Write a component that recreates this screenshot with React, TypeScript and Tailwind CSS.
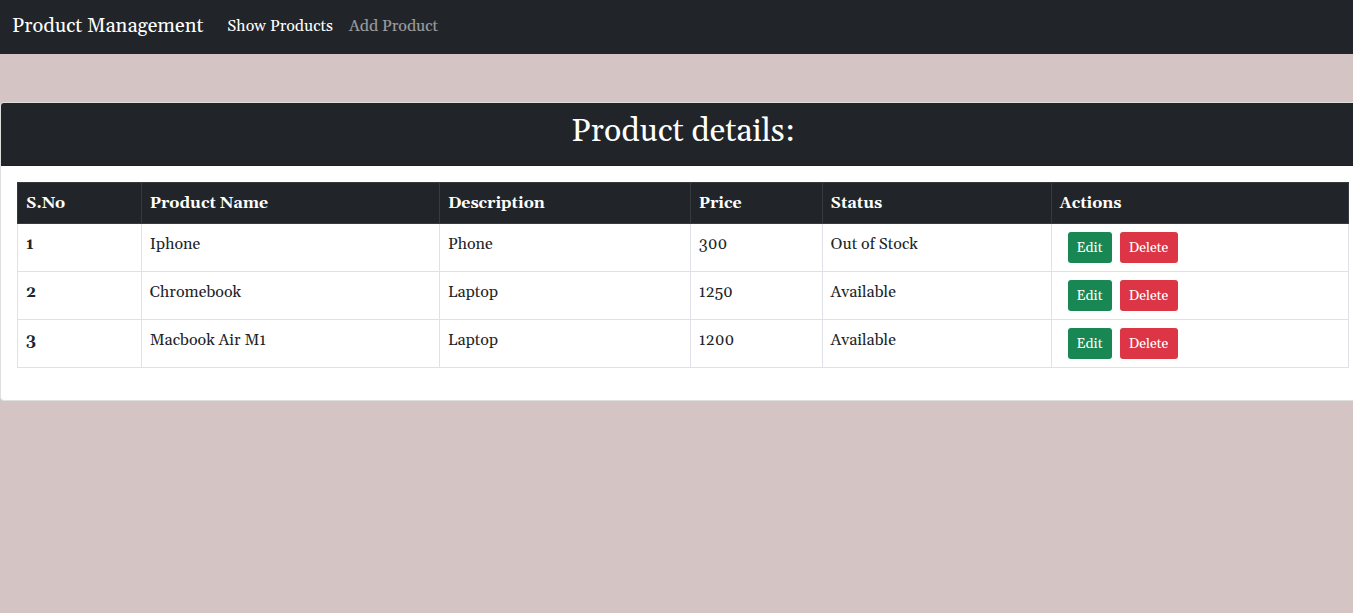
const products = [
  { name: 'Iphone', description: 'Phone', price: 300, status: 'Out of Stock' },
  { name: 'Chromebook', description: 'Laptop', price: 1250, status: 'Available' },
  { name: 'Macbook Air M1', description: 'Laptop', price: 1200, status: 'Available' },
];

const columns = [
  { label: 'S.No', width: 'w-[9.3%]' },
  { label: 'Product Name', width: 'w-[22.4%]' },
  { label: 'Description', width: 'w-[18.85%]' },
  { label: 'Price', width: 'w-[9.9%]' },
  { label: 'Status', width: 'w-[17.2%]' },
  { label: 'Actions', width: '' },
];

function NavBar() {
  return (
    <nav className="flex items-center bg-[#212529] px-3 pt-1.5 pb-2">
      <a href="#home" className="mr-4 text-xl leading-[30px] text-white">Product Management</a>
      <a href="#products" className="p-2 text-white">Show Products</a>
      <a href="#add" className="p-2 text-white/55">Add Product</a>
    </nav>
  );
}

export default function App() {
  return (
    <div className="min-h-screen overflow-x-hidden bg-[#d4c4c4] font-[Georgia,Gelasio,'Liberation_Serif',serif] text-base leading-6 text-[#212529]">
      <NavBar />
      <main className="mt-12 -mr-[13px] rounded border border-[#dfdfdf] bg-white">
        <header className="rounded-t-[3px] border-b border-[#1d2024] bg-[#212529] px-4 pt-2 pb-3">
          <h1 className="text-center text-[32px] leading-[42px] text-white">Product details:</h1>
        </header>
        <div className="p-4 pb-8">
          <table className="w-full table-fixed border-collapse">
            <thead>
              <tr className="bg-[#212529] text-left text-white">
                {columns.map((c) => (
                  <th key={c.label} scope="col" className={`border border-[#373b3e] p-2 font-bold ${c.width}`}>{c.label}</th>
                ))}
              </tr>
            </thead>
            <tbody>
              {products.map((p, i) => (
                <tr key={p.name} className="align-top">
                  <th scope="row" className="border border-[#dee2e6] p-2 text-left font-bold">{i + 1}</th>
                  <td className="border border-[#dee2e6] p-2">{p.name}</td>
                  <td className="border border-[#dee2e6] p-2">{p.description}</td>
                  <td className="border border-[#dee2e6] p-2">{p.price}</td>
                  <td className="border border-[#dee2e6] p-2">{p.status}</td>
                  <td className="border border-[#dee2e6] p-2">
                    <div className="flex gap-2 pl-2">
                      <button type="button" className="h-[31px] w-11 rounded-[3px] bg-[#198754] text-sm text-white">Edit</button>
                      <button type="button" className="h-[31px] w-[58px] rounded-[3px] bg-[#dc3545] text-sm text-white">Delete</button>
                    </div>
                  </td>
                </tr>
              ))}
            </tbody>
          </table>
        </div>
      </main>
    </div>
  );
}
